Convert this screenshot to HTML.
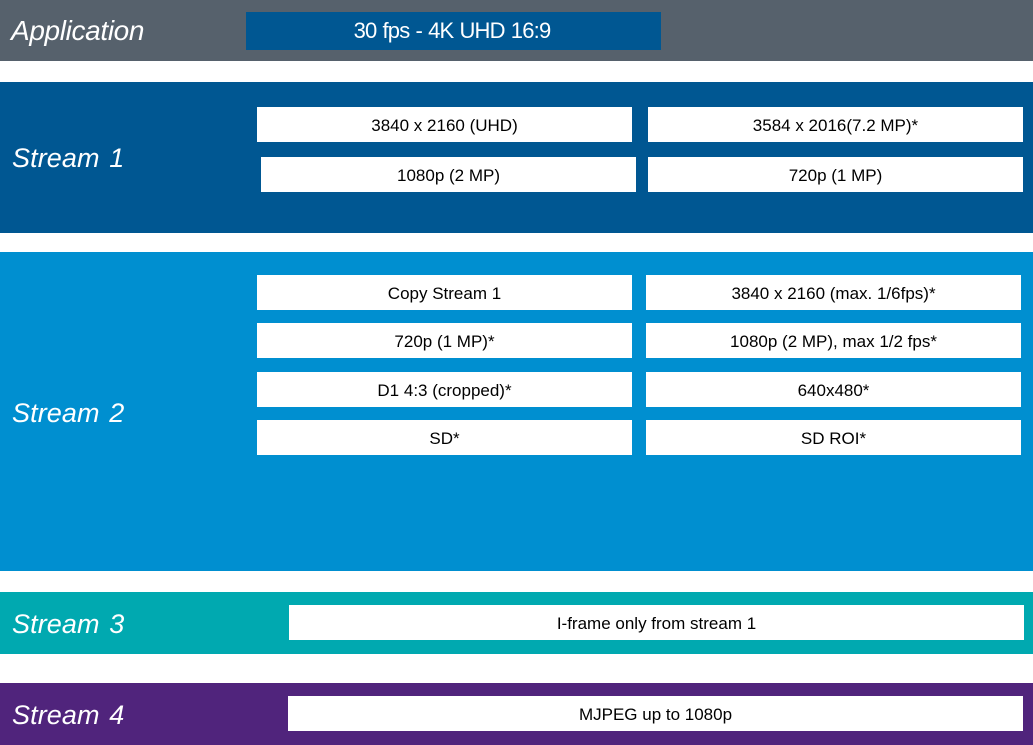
<!DOCTYPE html>
<html><head><meta charset="utf-8"><style>
html,body{margin:0;padding:0;background:#fff}
body{width:1033px;height:745px;position:relative;overflow:hidden;font-family:"Liberation Sans",sans-serif}
.b{position:absolute;left:0;width:1033px}
.l{position:absolute;left:12px;color:#fff;font-style:italic;font-size:27px;line-height:32px;white-space:nowrap;letter-spacing:.1px;word-spacing:2px}
.c{position:absolute;background:#fff;color:#000;font-size:17px;text-align:center;white-space:nowrap;height:35px;line-height:38px}
</style></head><body>
<div class="b" style="top:0;height:61px;background:#56616c"></div>
<div class="b" style="top:82px;height:151px;background:#005792"></div>
<div class="b" style="top:252px;height:319px;background:#008fd0"></div>
<div class="b" style="top:592px;height:62px;background:#00a9b0"></div>
<div class="b" style="top:683px;height:62px;background:#50247c"></div>

<div class="l" style="left:11px;top:15px;font-size:28px;letter-spacing:-.35px;word-spacing:0">Application</div>
<div class="l" style="top:142px">Stream 1</div>
<div class="l" style="top:397px">Stream 2</div>
<div class="l" style="top:608px">Stream 3</div>
<div class="l" style="top:699px">Stream 4</div>

<div class="c" style="left:246px;top:12px;width:415px;height:38px;line-height:37px;background:#005792;color:#fff;font-size:22px;letter-spacing:-.8px;word-spacing:.75px;text-indent:-3px">30 fps - 4K UHD 16:9</div>

<div class="c" style="left:257px;top:107px;width:375px">3840 x 2160 (UHD)</div>
<div class="c" style="left:648px;top:107px;width:375px">3584 x 2016(7.2 MP)*</div>
<div class="c" style="left:261px;top:157px;width:375px">1080p (2 MP)</div>
<div class="c" style="left:648px;top:157px;width:375px">720p (1 MP)</div>

<div class="c" style="left:257px;top:275px;width:375px">Copy Stream 1</div>
<div class="c" style="left:646px;top:275px;width:375px">3840 x 2160 (max. 1/6fps)*</div>
<div class="c" style="left:257px;top:323px;width:375px">720p (1 MP)*</div>
<div class="c" style="left:646px;top:323px;width:375px">1080p (2 MP), max 1/2 fps*</div>
<div class="c" style="left:257px;top:372px;width:375px">D1 4:3 (cropped)*</div>
<div class="c" style="left:646px;top:372px;width:375px">640x480*</div>
<div class="c" style="left:257px;top:420px;width:375px">SD*</div>
<div class="c" style="left:646px;top:420px;width:375px">SD ROI*</div>

<div class="c" style="left:289px;top:605px;width:735px">I-frame only from stream 1</div>
<div class="c" style="left:288px;top:696px;width:735px">MJPEG up to 1080p</div>
</body></html>
